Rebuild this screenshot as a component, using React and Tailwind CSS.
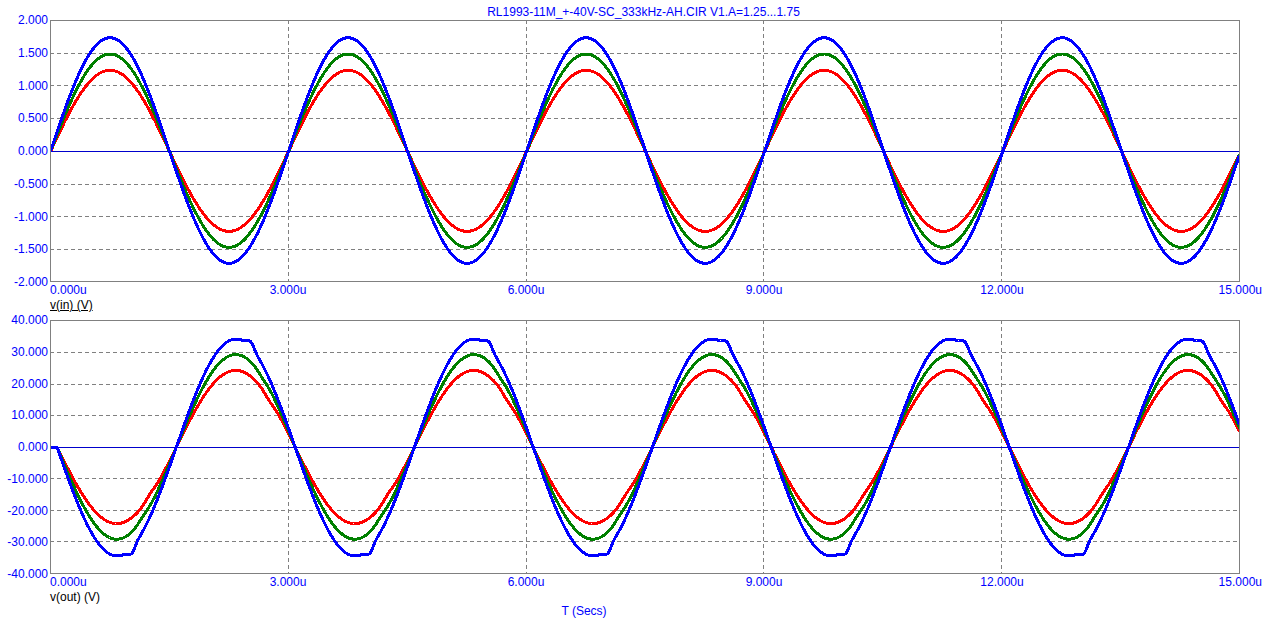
const PLOT_W = 1189;
const T_MAX = 15;
const PERIOD = 3.003;

function inWave(amp, t) {
  const v = amp * Math.sin((2 * Math.PI * t) / PERIOD);
  return v < 0 ? v * 0.983 : v;
}

function bump(phase, center, left, right, height) {
  let d = phase - center;
  if (d > 0.5) d -= 1;
  if (d < -0.5) d += 1;
  const w = d < 0 ? left : right;
  return height * Math.exp(-(d * d) / (2 * w * w));
}

function outWave(amp, t, kind) {
  const delay = 0.085;
  const s = t - delay;
  if (s <= 0) return 0;
  const phase = ((s / PERIOD) % 1 + 1) % 1;
  let v = -amp * Math.sin((2 * Math.PI * s) / PERIOD);
  if (kind === "blue") {
    v -= bump(phase, 0.315, 0.017, 0.011, 1.9);
    v += bump(phase, 0.815, 0.017, 0.012, 1.8);
  } else {
    if (v < 0) v *= 0.987;
  }
  if (kind === "green") {
    v += bump(phase, 0.36, 0.02, 0.02, 0.6);
    v -= bump(phase, 0.86, 0.02, 0.02, 0.5);
  }
  if (kind === "red") {
    v += bump(phase, 0.39, 0.02, 0.02, 0.7);
    v -= bump(phase, 0.89, 0.02, 0.02, 0.7);
  }
  return v;
}

function points(fn, zeroY, pxPerUnit) {
  const out = [];
  for (let x = 0; x <= PLOT_W; x += 1) {
    const t = (x / PLOT_W) * T_MAX;
    out.push(`${x + 0.5},${(zeroY - fn(t) * pxPerUnit).toFixed(2)}`);
  }
  return out.join(" ");
}

function Plot({ height, zeroY, pxPerUnit, grid, curves }) {
  const vx = [1, 2, 3, 4].map((i) => Math.round((i * PLOT_W) / 5) + 0.5);
  return (
    <svg width={PLOT_W + 1} height={height + 1} className="block shrink-0" shapeRendering="crispEdges">
      {vx.map((x) => (
        <line key={x} x1={x} x2={x} y1={0} y2={height} stroke="#808080" strokeDasharray="4 3" />
      ))}
      {grid.map((y) => (
        <line key={y} x1={0} x2={PLOT_W} y1={y + 0.5} y2={y + 0.5} stroke="#808080" strokeDasharray="4 3" />
      ))}
      <line x1={0} x2={PLOT_W} y1={zeroY + 0.5} y2={zeroY + 0.5} stroke="#0000cc" />
      {curves.map((c) => (
        <polyline
          key={c.color}
          points={points(c.fn, zeroY + 0.5, pxPerUnit)}
          fill="none"
          stroke={c.color}
          strokeWidth="3"
          strokeLinejoin="round"
        />
      ))}
      <rect x={0.5} y={0.5} width={PLOT_W} height={height} fill="none" stroke="#808080" />
    </svg>
  );
}

function YLabels({ labels, height }) {
  return (
    <div
      className="w-[49px] shrink-0 flex flex-col justify-between items-end pr-[1px] -my-[7px] text-[#0000ff]"
      style={{ height: height + 15 }}
    >
      {labels.map((l) => (
        <span key={l} className="block h-[14px] leading-[14px]">
          {l}
        </span>
      ))}
    </div>
  );
}

function XLabels() {
  return (
    <div className="flex pl-[50px] h-[15px] leading-[14px] text-[#0000ff] mt-[2px]">
      <span className="w-[119px] shrink-0">0.000u</span>
      <span className="w-[238px] shrink-0 text-center">3.000u</span>
      <span className="w-[238px] shrink-0 text-center">6.000u</span>
      <span className="w-[238px] shrink-0 text-center">9.000u</span>
      <span className="w-[238px] shrink-0 text-center">12.000u</span>
      <span className="w-[149px] shrink-0 text-right pr-[8px]">15.000u</span>
    </div>
  );
}

const topY = ["2.000", "1.500", "1.000", "0.500", "0.000", "-0.500", "-1.000", "-1.500", "-2.000"];
const botY = ["40.000", "30.000", "20.000", "10.000", "0.000", "-10.000", "-20.000", "-30.000", "-40.000"];

export default function App() {
  return (
    <div
      className="w-[1270px] h-[626px] bg-white text-[12px] overflow-hidden"
      style={{ fontFamily: '"Liberation Sans", Arial, sans-serif' }}
    >
      <div className="h-[20px] pt-[5px] leading-[14px] pl-[50px] pr-[33px] text-center text-[#0000ff]">
        RL1993-11M_+-40V-SC_333kHz-AH.CIR V1.A=1.25...1.75
      </div>
      <div className="flex items-start gap-[1px] h-[261px]">
        <YLabels labels={topY} height={261} />
        <Plot
          height={261}
          zeroY={131}
          pxPerUnit={65}
          grid={[33, 65, 98, 164, 196, 229]}
          curves={[
            { color: "#ff0000", fn: (t) => inWave(1.25, t) },
            { color: "#008000", fn: (t) => inWave(1.5, t) },
            { color: "#0000ff", fn: (t) => inWave(1.75, t) },
          ]}
        />
      </div>
      <XLabels />
      <div className="h-[14px] leading-[14px] pl-[50px] text-black">
        <span className="underline">v(in) (V)</span>
      </div>
      <div className="flex items-start gap-[1px] h-[253px] mt-[8px]">
        <YLabels labels={botY} height={253} />
        <Plot
          height={253}
          zeroY={127}
          pxPerUnit={3.16}
          grid={[32, 64, 95, 158, 190, 221]}
          curves={[
            { color: "#ff0000", fn: (t) => outWave(24.4, t, "red") },
            { color: "#008000", fn: (t) => outWave(29.4, t, "green") },
            { color: "#0000ff", fn: (t) => outWave(34.3, t, "blue") },
          ]}
        />
      </div>
      <XLabels />
      <div className="h-[14px] leading-[14px] pl-[50px] text-black">v(out) (V)</div>
      <div className="leading-[14px] pl-[50px] pr-[152px] text-center text-[#0000ff]">T (Secs)</div>
    </div>
  );
}
